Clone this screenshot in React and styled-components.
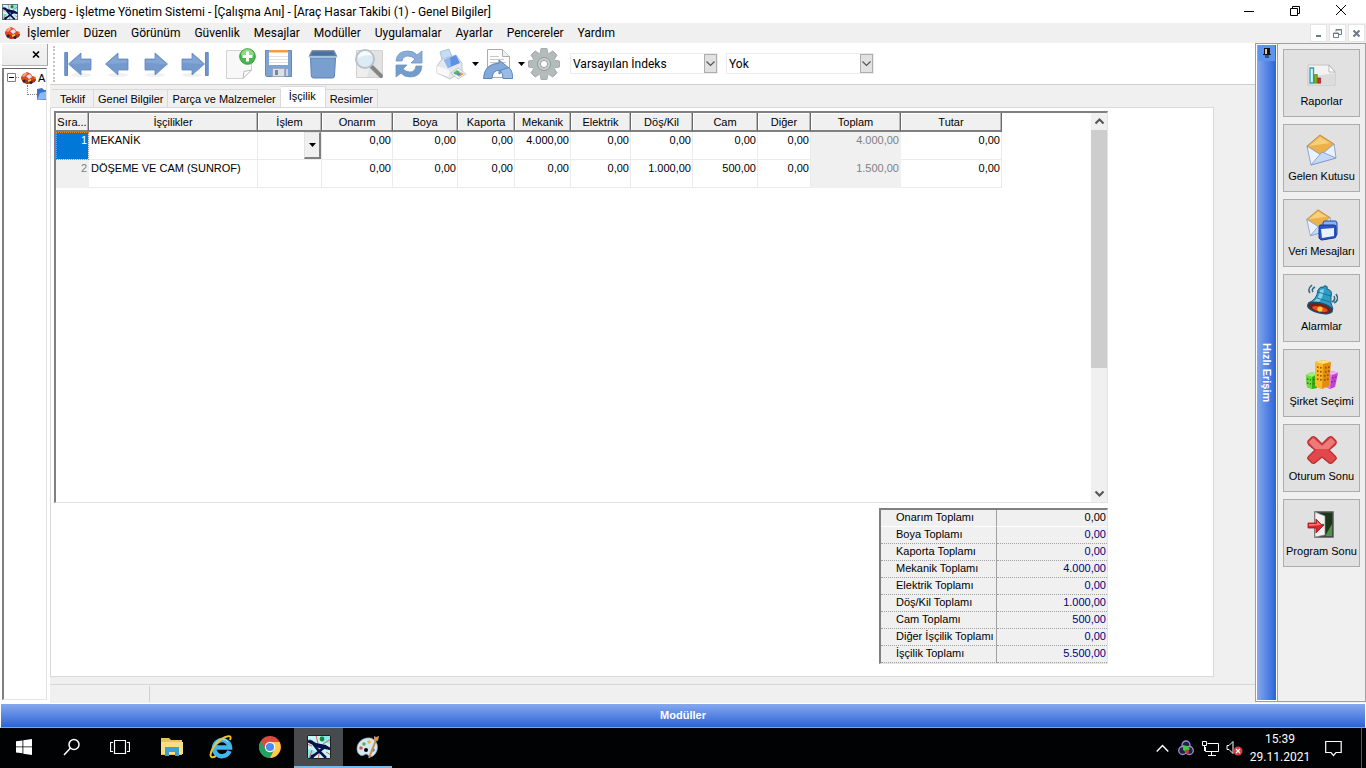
import React from "react";
import styled, { createGlobalStyle, css } from "styled-components";

const UI = `Roboto, "Noto Sans", sans-serif`;
const SANS = `"Liberation Sans", Arial, sans-serif`;

const GlobalStyle = createGlobalStyle`
  *, *::before, *::after { box-sizing: border-box; }
  body { margin: 0; background: #f0f0f0; color: #000; font: 11px/14px ${SANS}; }
  button, select { font: inherit; color: inherit; border: 0; padding: 0; margin: 0; background: none; border-radius: 0; }
  svg { display: block; flex: none; }
`;

const Screen = styled.div`
  display: flex;
  flex-direction: column;
  min-height: 100vh;
`;

/* ---------- title and menu ---------- */
const TitleBar = styled.header`
  display: flex;
  align-items: center;
  height: 23px;
  padding-left: 2px;
  background: #fff;
  font: 12px/16px ${UI};
`;
const Title = styled.h1`
  flex: 1;
  margin: 0 0 0 5px;
  font: inherit;
  white-space: nowrap;
`;
const CaptionButton = styled.button`
  display: grid;
  place-items: center;
  width: 46px;
  height: 20px;
`;
const CaptionGroup = styled.div`
  display: flex;
  padding-right: 2px;
`;
const MenuBar = styled.nav`
  display: flex;
  align-items: center;
  height: 20px;
  padding: 0 1px 0 4px;
  font: 12px/16px ${UI};
`;
const MenuList = styled.div`
  display: flex;
  flex: 1;
  gap: 14px;
  padding-left: 6px;
`;
const MenuButton = styled.button`
  white-space: nowrap;
`;
const ChildButton = styled.button`
  display: grid;
  place-items: center;
  width: 17px;
  height: 18px;
  margin-left: 2px;
  background: #fff;
  border: 1px solid #e4e4e4;
`;

/* ---------- workspace ---------- */
const Workspace = styled.div`
  display: flex;
  flex: 1;
`;
const TreePanel = styled.aside`
  display: flex;
  flex-direction: column;
  width: 50px;
  padding: 1px 2px 3px 2px;
  background: #fff;
`;
const PanelHead = styled.div`
  display: flex;
  justify-content: flex-end;
  height: 22px;
  padding-right: 4px;
  margin-bottom: 2px;
  background: linear-gradient(#f4f4f4, #ececec);
  border-right: 1px solid #a0a0a0;
  border-bottom: 1px solid #b4b4b4;
`;
const CloseButton = styled.button`
  display: grid;
  place-items: center;
  width: 15px;
`;
const Tree = styled.ul`
  flex: 1;
  width: 45px;
  margin: 0;
  padding: 0 0 0 3px;
  list-style: none;
  overflow: hidden;
  border: 1px solid #e3e3e3;
  border-top-color: #696969;
  border-left: 2px solid #808080;
`;
const TreeItem = styled.li`
  display: flex;
  align-items: center;
  height: 17px;
  gap: ${(p) => (p.$child ? 0 : 1)}px;
  padding-left: ${(p) => (p.$child ? 20 : 0)}px;
`;
const Lead = styled.span`
  width: 10px;
  height: 10px;
  margin-top: -10px;
  flex: none;
  border-left: 1px dotted #808080;
  border-bottom: 1px dotted #808080;
`;

const Main = styled.main`
  display: flex;
  flex: 1;
  flex-direction: column;
  min-width: 0;
`;
const Toolbar = styled.div`
  display: flex;
  align-items: center;
  height: 42px;
  padding-left: 3px;
  background: #fff;
  border-bottom: 1px solid #cdcdcd;
`;
const Grip = styled.span`
  width: 5px;
  height: 36px;
  border-left: 2px dotted #c4c4c4;
`;
const ToolButton = styled.button`
  display: grid;
  place-items: center;
  width: ${(p) => p.$w || 39}px;
  height: 36px;
  margin-left: ${(p) => p.$before || 0}px;
`;
const Combo = styled.div`
  display: grid;
  align-items: center;
  width: 148px;
  height: 21px;
  margin-left: 8px;
  border: 1px solid #ececec;
  font: 12px/16px ${UI};
`;
const ComboSelect = styled.select`
  grid-area: 1 / 1;
  width: 100%;
  height: 19px;
  padding-left: 2px;
  appearance: none;
  outline: 0;
`;
const ComboArrow = styled.span`
  display: grid;
  grid-area: 1 / 1;
  place-items: center;
  justify-self: end;
  width: 13px;
  height: 19px;
  pointer-events: none;
  background: #e1e1e1;
  border: 1px solid #adadad;
`;

const Tabs = styled.div`
  display: flex;
  align-items: flex-end;
  height: 22px;
  padding-left: 2px;
`;
const Tab = styled.button`
  min-width: 42px;
  height: 18px;
  padding: 0 4px;
  white-space: nowrap;
  border: 1px solid #d9d9d9;
  border-width: 1px 1px 0 0;
  ${(p) =>
    p.$active &&
    css`
      height: 21px;
      padding: 0 9px 3px 8px;
      background: #fff;
    `}
`;
const Page = styled.section`
  display: flex;
  flex: 1;
  flex-direction: column;
  align-items: flex-end;
  gap: 5px;
  margin-right: 41px;
  padding: 3px 105px 12px 3px;
  background: #fff;
  border: 1px solid #d9d9d9;
`;
const GridFrame = styled.div`
  display: flex;
  flex: 1;
  align-self: stretch;
  justify-content: space-between;
  border: 1px solid #e3e3e3;
  border-top: 2px solid #808080;
  border-left: 2px solid #808080;
`;
const Grid = styled.table`
  align-self: flex-start;
  table-layout: fixed;
  width: 946px;
  border-collapse: separate;
  border-spacing: 0;
`;
const HeadCell = styled.th`
  height: 19px;
  padding: 0;
  font-weight: 400;
  text-align: center;
  white-space: nowrap;
  background: #f0f0f0;
  border-right: 1px solid #696969;
  border-bottom: 2px solid #808080;
  box-shadow: inset -1px 0 #b8b8b8, inset 1px 1px #fff;
`;
const Cell = styled.td`
  height: 28px;
  padding: ${(p) => (p.$flush ? "0" : "1px 1px 0 2px")};
  text-align: ${(p) => (p.$text ? "left" : "right")};
  vertical-align: top;
  white-space: nowrap;
  border-right: 1px solid #ebebeb;
  border-bottom: 1px solid #ebebeb;
  ${(p) =>
    p.$muted &&
    css`
      color: #808080;
      background: #f0f0f0;
      border-color: #f0f0f0;
    `}
  ${(p) =>
    p.$selected &&
    css`
      color: #fff;
      background: #0078d7;
      outline: 1px dotted #e08a28;
      outline-offset: -1px;
    `}
`;
const CellCombo = styled.div`
  display: grid;
  height: 27px;
`;
const CellSelect = styled.select`
  grid-area: 1 / 1;
  width: 100%;
  appearance: none;
`;
const CellArrow = styled.span`
  display: grid;
  grid-area: 1 / 1;
  place-items: center;
  justify-self: end;
  width: 17px;
  height: 27px;
  pointer-events: none;
  background: #f0f0f0;
  border: 1px solid #e3e3e3;
  border-right: 2px solid #808080;
  border-bottom: 2px solid #808080;
`;
const ScrollTrack = styled.div`
  display: flex;
  flex-direction: column;
  width: 16px;
  background: #f0f0f0;
`;
const ScrollButton = styled.button`
  display: grid;
  place-items: center;
  height: 17px;
`;
const ScrollRail = styled.div`
  flex: 1;
`;
const ScrollThumb = styled.div`
  height: 67%;
  background: #cdcdcd;
`;

const Totals = styled.table`
  width: 229px;
  table-layout: fixed;
  border-collapse: separate;
  border-spacing: 0;
  background: #f0f0f0;
  border: 1px solid #e3e3e3;
  border-top: 2px solid #808080;
  border-left: 2px solid #808080;
`;
const TotalRow = styled.tr`
  color: ${(p) => (p.$current ? "#000" : "#000080")};
  th, td {
    height: 17px;
    padding: 0 1px 2px 0;
    line-height: 14px;
    border-bottom: 1px ${(p) => (p.$current ? "solid #fff" : "dotted #a0a0a0")};
  }
  th {
    padding-left: 15px;
    color: #000;
    font-weight: 400;
    text-align: left;
    white-space: nowrap;
    border-right: 1px solid #a0a0a0;
  }
  td { text-align: right; }
`;
const StatusBar = styled.footer`
  height: 19px;
  margin-top: 7px;
  padding-top: 1px;
  border-top: 1px solid #d7d7d7;
`;
const StatusPane = styled.div`
  width: 100px;
  height: 16px;
  border-right: 1px solid #d0d0d0;
`;

/* ---------- quick access ---------- */
const QuickHandle = styled.div`
  display: grid;
  grid-template-rows: 16px 1fr 16px;
  justify-items: center;
  width: 23px;
  margin-bottom: 1px;
  padding: 1px;
  color: #fff;
  font-weight: 700;
  background: linear-gradient(90deg, #86a8ec, #2a64da) content-box, #fff;
  border: 1px solid #a0a0a0;
`;
const HandleText = styled.span`
  align-self: center;
  writing-mode: vertical-rl;
`;
const PinButton = styled.button`
  display: grid;
  place-items: center;
  width: 17px;
  background: #5b93ee;
`;
const QuickPanel = styled.nav`
  display: flex;
  flex-direction: column;
  gap: 7px;
  width: 88px;
  margin-bottom: 1px;
  padding: 5px 5px 0;
  border: 1px solid #a0a0a0;
  border-left: 0;
`;
const QuickButton = styled.button`
  display: flex;
  flex-direction: column;
  align-items: center;
  gap: 3px;
  height: 68px;
  padding-top: 9px;
  white-space: nowrap;
  background: #e1e1e1;
  border: 1px solid #adadad;
`;

const ModulesBar = styled.button`
  height: 25px;
  padding-bottom: 2px;
  color: #fff;
  font-weight: 700;
  background: linear-gradient(#86a8ec, #2a64da);
  border: 1px solid #fff;
  border-bottom-color: #a0a0a0;
`;

/* ---------- taskbar ---------- */
const Taskbar = styled.footer`
  display: flex;
  height: 40px;
  color: #fff;
  background: #000204;
  font: 12px/18px ${UI};
`;
const TaskGroup = styled.div`
  display: flex;
  flex: 1;
`;
const TaskButton = styled.button`
  display: grid;
  place-items: center;
  width: ${(p) => (p.$app ? 49 : 48)}px;
  margin-left: ${(p) => (p.$first ? 3 : 0)}px;
  background: ${(p) => (p.$active ? "#484b4e" : "transparent")};
  border: solid ${(p) => (p.$running ? "#76b9ed" : "transparent")};
  border-width: 0 0 2px;
`;
const Tray = styled.div`
  display: flex;
  align-items: center;
`;
const TrayButton = styled.button`
  display: grid;
  place-items: center;
  width: 24px;
  height: 40px;
`;
const Clock = styled.time`
  width: 68px;
  text-align: center;
`;
const NoticeButton = styled(TrayButton)`
  width: 38px;
`;
const DesktopEdge = styled.span`
  width: 5px;
  height: 40px;
  margin-left: 9px;
  border-left: 1px solid #55585a;
`;

/* ---------- drawings ---------- */
const AppIcon = ({ s = 16 }) => (
  <svg width={s} height={s} viewBox="0 0 24 24" aria-hidden="true">
    <path fill="#c5f5f7" d="M0 0h24v24H0z" />
    <path fill="#8be6ea" d="M13 0h11v9L14 7zM0 14l8 2-2 8H0z" />
    <path stroke="#e0625c" strokeWidth="1" fill="none" d="M0 9l5 2M2 24l3-9M9 0l2 9M16 9l8-5M8 19l5-2 4 5M19 17l5 3M13 15l-2 9" />
    <path stroke="#08104a" strokeWidth="2.600" fill="none" d="M1 6l8 4 9 1 5 3M4 6l7 9 8 8M19 11L5 22" />
    <path fill="#08104a" d="M2 4l7 4 5 1 9 4v2l-11-2-5-2zM4 20l4-1-2 5-3-1z" />
    <circle cx="15" cy="4" r="2.400" fill="#128a38" />
    <path fill="none" stroke="#222" d="M.5.500h23v23H.5z" />
  </svg>
);
const CarIcon = () => (
  <svg width="17" height="16" viewBox="0 0 17 16" aria-hidden="true">
    <path fill="#27448c" d="M1 8l3 5 4 1v-3zM12 9l4-1-1 4-3 1z" />
    <path fill="#e4451b" d="M1 7l2-3 4-2 4 2 1 2 4 1v3l-4 3-5 1-4-2-2-3z" />
    <path fill="#fca47d" d="M2 6l3-3 3 0-4 4z" />
    <path fill="#d9e8ff" d="M6 6l4-2 2 3-3 2z" />
    <path fill="#b82d10" d="M4 9l5 2 7-2v1l-4 3-5 1-3-2z" />
    <path fill="#ffc63c" d="M8 10l3-1v2l-3 1zM14 8l2-1v2z" />
    <circle cx="4" cy="11" r="1.500" fill="#182448" /><circle cx="11" cy="12.500" r="1.500" fill="#182448" />
  </svg>
);
const FolderIcon = () => (
  <svg width="16" height="15" viewBox="0 0 16 15" aria-hidden="true">
    <path fill="#3f72c7" d="M0 2l5-1 2 2h7v10H0z" /><path fill="#8bb9f5" d="M0 13L3 6l13-3-3 9z" />
  </svg>
);
const Arrow = ({ flip, bar }) => (
  <svg width={bar ? 28 : 24} height="28" viewBox={bar ? "0 0 28 28" : "4 0 24 28"} aria-hidden="true">
    <g transform={flip ? (bar ? "translate(28 0) scale(-1 1)" : "translate(32 0) scale(-1 1)") : undefined}>
      <ellipse cx="17" cy="25" rx="10" ry="2" fill="#f0f1f3" />
      {bar && <path fill="#7198ce" stroke="#5c87c0" d="M.8 2.500h2.700v23H.8z" />}
      <path fill="#7399cd" stroke="#6289bf" strokeWidth=".8" d="M4.500 14L17 3v6h10v11H17v5z" />
      <path fill="#8eafd9" d="M6 14L16.500 5v5H26v3z" opacity=".6" />
    </g>
  </svg>
);
const NewIcon = () => (
  <svg width="30" height="32" viewBox="0 0 30 32" aria-hidden="true">
    <path fill="#f8f8f8" stroke="#d2d2d2" d="M.5 2.500h25V22L17 30.500H.5z" />
    <path fill="#fff" stroke="#bdbdbd" d="M17 30.500l1-7 7.500-1.500z" />
    <circle cx="21.500" cy="8.500" r="7.800" fill="#45b94a" stroke="#2e9837" />
    <path fill="#8dda83" d="M15 7a6.500 6 0 0 1 13 0q-6 3-13 0z" />
    <path stroke="#fff" strokeWidth="3" d="M21.500 3.500v10M16.500 8.500h10" />
  </svg>
);
const SaveIcon = () => (
  <svg width="28" height="28" viewBox="0 0 28 28" aria-hidden="true">
    <path fill="#7da3d2" stroke="#6189bd" d="M.5.500h26v26h-25l-1-1z" />
    <path fill="#fff" d="M4 1h19v14H4z" /><path fill="#f49b4d" d="M4 0h19v2.500H4z" />
    <path stroke="#e1e1e1" d="M4 6.500h19M4 9.500h19M4 12.500h19" />
    <path fill="#dce0e5" stroke="#a1aab6" d="M7.500 18.500h12v8h-12z" /><path fill="#76889e" d="M10 20h3v5h-3z" />
    <path fill="#c5d5e9" d="M21 19h2v7h-2z" />
  </svg>
);
const TrashIcon = () => (
  <svg width="30" height="30" viewBox="0 0 30 30" aria-hidden="true">
    <path fill="#789fce" stroke="#5c83b8" d="M2.500 9h25l-1 18q-.2 2-2 2h-19q-2 0-2.200-2z" />
    <path fill="#5b7fb1" stroke="#8b9099" d="M4 1.500h22l3 6H1z" />
    <path fill="#4b6f9f" d="M5 3h20l1.500 3h-23z" /><path fill="#a5c1e2" d="M1 7h28v2H1z" />
  </svg>
);
const FindIcon = () => (
  <svg width="30" height="30" viewBox="0 0 30 30" aria-hidden="true">
    <path fill="#eee" stroke="#d0d0d0" d="M2.500 1.500h26v27h-26z" />
    <path fill="#dadada" d="M20 1h8v27H13z" opacity=".6" />
    <path stroke="#858585" strokeWidth="4" strokeLinecap="round" d="M18 18l9 9" />
    <circle cx="11" cy="10" r="9" fill="#dcebf5" stroke="#bbc1c6" strokeWidth="2" />
    <path fill="#f5fafd" d="M4 9q1-7 8-7 5 1 6 5-7-2-14 2z" />
  </svg>
);
const RefreshIcon = () => (
  <svg width="28" height="28" viewBox="0 0 28 28" aria-hidden="true" stroke="#6d94c5" strokeWidth=".8">
    <path fill="#8bacd6" d="M1 11Q2 1 13 1q6 0 9 4l5-4v12H16l4-4q-3-3-7-3-5 0-6 5z" />
    <path fill="#739bcc" d="M27 16q-1 11-12 11-6 0-9-4l-5 4V15h11l-4 4q3 3 7 3 5 0 6-6z" />
  </svg>
);
const PrintIcon = () => (
  <svg width="30" height="32" viewBox="0 0 30 32" aria-hidden="true">
    <path fill="#c4dcf4" stroke="#9bb9d7" strokeWidth=".8" d="M4 4l9-3 4 10-10 4z" />
    <path fill="#e6e6ed" stroke="#b9b9c5" strokeWidth=".8" d="M1 18l5-7 14-4 6 8v9l-12 7L1 25z" />
    <path fill="#5d91e5" d="M8 12l12-5 4 8-12 5z" /><path fill="#8db6f3" d="M8 12l6-3 1 9-3 2z" />
    <path fill="#f8f8fa" d="M1 18l12 4v7L1 25z" />
    <path fill="#f5fafc" stroke="#a9b8bc" strokeWidth=".7" d="M15 25l7-5 8 6-8 5z" />
    <path fill="#56b868" d="M17 25l4-3 3 2-4 3z" /><path fill="#e9a446" d="M22 27l3-3 3 2-5 3z" /><path fill="#4f8ed4" d="M20 26l3-2 2 2-3 2z" />
  </svg>
);
const ShareIcon = () => (
  <svg width="30" height="32" viewBox="0 0 30 32" aria-hidden="true">
    <path fill="#fcfcfc" stroke="#acacac" d="M4.500 1.500h15l7 7v21h-22z" />
    <path fill="#eee" stroke="#acacac" d="M19.500 1.500v7h7" />
    <path stroke="#c8c8c8" d="M7 8.500h9M7 11.500h14M7 14.500h16" />
    <path fill="#84a9d8" stroke="#5b86bd" d="M.5 30.500Q1 16 16 15v-3l10 8-10 6v-4q-7 1-7 8.500z" />
    <path fill="#9abce4" stroke="#5b86bd" d="M20 30.500q0-6-3-8l9-3q4 4 3.500 11z" />
  </svg>
);
const GearIcon = () => (
  <svg width="32" height="32" viewBox="-16 -16 32 32" aria-hidden="true">
    <g fill="#b4bbbb" stroke="#9aa3a3" strokeWidth=".8">
      {[0, 45, 90, 135].map((a) => (
        <path key={a} transform={`rotate(${a})`} d="M-4-10l1-5.500h6L4-10v20l-1 5.500h-6L-4 10z" />
      ))}
    </g>
    <circle r="11.500" fill="#b4bbbb" /><circle r="6.500" fill="#c9cece" stroke="#8f999a" /><circle r="3.600" fill="#fff" stroke="#949e9f" />
  </svg>
);
const Triangle = () => (
  <svg width="7" height="4" viewBox="0 0 7 4" aria-hidden="true"><path d="M0 0h7L3.500 4z" /></svg>
);
const Chevron = ({ up, color = "#555", s = 9, w = 1.200 }) => (
  <svg width={s} height={s} viewBox="0 0 9 9" aria-hidden="true" fill="none" stroke={color} strokeWidth={w}>
    <path d={up ? "M.5 6.500l4-4 4 4" : "M.5 2.500l4 4 4-4"} />
  </svg>
);
const ReportIcon = () => (
  <svg width="32" height="32" viewBox="0 0 32 32" aria-hidden="true">
    <path fill="#f3f3f3" stroke="#bcbcbc" strokeWidth=".8" d="M2 6h21l6 7v13H2z" />
    <path fill="#dcdcdc" d="M9 17l20-3v11H15z" /><path fill="#fff" stroke="#aaa" strokeWidth=".8" d="M23 6v7h6z" />
    <path fill="#dff8fa" stroke="#23a2b6" strokeWidth="1.300" d="M4 9h3.500v15H4z" />
    <path fill="#70b91f" stroke="#3f8610" strokeWidth=".7" d="M8.500 15.500h2.800v8.700H8.500z" />
    <path fill="#d3332d" stroke="#9d1611" strokeWidth=".7" d="M11.800 19h2.800v5.200h-2.800z" />
  </svg>
);
const Envelope = () => (
  <>
    <path fill="#ecb14a" stroke="#ae8032" strokeWidth=".8" d="M1 12L14 1l14 9-4 13-20-3z" />
    <path fill="#f8cf7c" d="M3 12L14 3l10 6z" />
    <path fill="#e9f2ff" stroke="#7b93c4" strokeWidth=".8" d="M1 12l14 9L28 10l2 14L5 31z" />
    <path fill="#c5dafa" stroke="#7b93c4" strokeWidth=".8" d="M5 31l11-13 14 6z" />
  </>
);
const InboxIcon = () => (
  <svg width="32" height="32" viewBox="0 0 32 32" aria-hidden="true"><Envelope /></svg>
);
const DataIcon = () => (
  <svg width="32" height="32" viewBox="0 0 32 32" aria-hidden="true">
    <g transform="scale(.86)"><Envelope /></g>
    <path fill="#8ab1f1" stroke="#2447a5" d="M17 14q0-2 2-2l10 0q2 0 2 2v11q0 2-2 2l-10 2q-2 0-2-2z" />
    <path fill="#2c55c7" stroke="#1b3791" d="M13 18q0-2 2-2h13q2 0 2 2v9q0 2-2 2l-12 2q-2 0-3-2z" />
    <path fill="#e7f1ff" d="M15 20l13-1v8l-12 2z" />
  </svg>
);
const BellIcon = () => (
  <svg width="32" height="32" viewBox="0 0 32 32" aria-hidden="true">
    <path fill="none" stroke="#2f6786" strokeWidth="1.500" d="M4 9Q1 5 6 1M7 8Q5 5 9 3M28 12q2 4-2 6M30 10q4 6-2 9" />
    <path fill="#2f9cc6" stroke="#155475" strokeWidth=".9" d="M2 19q9-3 10-13 2-4 6-3 0-2 2-1 2 0 1 3 6 1 4 8-1 6 2 12-2 3-8 3Q8 27 2 19z" />
    <path fill="#85d5e9" d="M7 18q7-5 7-12l4-1q-1 10-7 15z" />
    <path fill="none" stroke="#15658b" strokeWidth=".8" d="M12 8l13 4M11 14l13 4" />
    <ellipse cx="14" cy="24" rx="12.500" ry="5" transform="rotate(13 14 24)" fill="#7b1f12" stroke="#164f70" strokeWidth="1.500" />
    <ellipse cx="14" cy="25" rx="8" ry="2.500" transform="rotate(13 14 25)" fill="#e4501f" />
    <circle cx="14" cy="25" r="2.600" fill="#ffc837" />
  </svg>
);
const CompanyIcon = () => (
  <svg width="32" height="32" viewBox="0 0 32 32" aria-hidden="true">
    <path fill="#36ad14" d="M0 16l6-3 5 2v14l-5 1-5-2z" /><path fill="#6bdc38" d="M0 16l6 2v12l-5-2z" /><path fill="#a3f078" d="M0 16l6-3 5 2-5 3z" />
    <path fill="#c242d2" d="M20 14l7-2 5 2-3 14-5 2-4-2z" /><path fill="#e379ec" d="M20 14l6 2-2 14-4-2z" /><path fill="#f5b0f8" d="M20 14l7-2 5 2-6 2z" />
    <path fill="#e48c0c" d="M9 3l8-2 8 2-2 24-7 3-7-3z" /><path fill="#ffb927" d="M9 3l8 2-1 25-7-3z" /><path fill="#ffdf7d" d="M9 3l8-2 8 2-8 2z" />
    <path stroke="#8f5605" strokeWidth="1.700" strokeDasharray="1.600 1.500" d="M11 8l5 1M11 12l5 1M11 16l5 1M11 20l5 1M19 9l5-1M19 13l5-1M18 17l5-1M18 21l5-1" />
    <path stroke="#25750f" strokeWidth="1.300" strokeDasharray="1.500 1.500" d="M1 20l4 1M1 24l4 1M7 21l3-1M7 25l3-1" />
    <path stroke="#842a94" strokeWidth="1.300" strokeDasharray="1.500 1.500" d="M26 19l5-1M25 23l4-1" />
  </svg>
);
const CrossIcon = () => (
  <svg width="32" height="32" viewBox="0 0 32 32" aria-hidden="true">
    <path fill="#e0484b" stroke="#b92c31" strokeWidth="1.200" strokeLinejoin="round" d="M2 7l4-4q2-1 4 1l6 6 6-6q2-2 4-1l4 4q1 2-1 4l-6 5 6 6q2 2 1 3l-4 4q-2 1-4-1l-6-5-6 5q-2 2-4 1l-4-4q-1-1 1-3l6-6-6-5q-2-2-1-4z" />
    <path fill="#f28c8b" d="M3 8l4-4 9 8 9-8 4 4-6 7H9z" opacity=".75" />
  </svg>
);
const ExitIcon = () => (
  <svg width="32" height="32" viewBox="0 0 32 32" aria-hidden="true">
    <path fill="#1d3518" stroke="#555" strokeWidth="1.500" d="M9 3h18v25H9z" />
    <path fill="#4f9147" d="M19 27l7-12v12z" />
    <path fill="#f2f2f2" stroke="#888" strokeWidth=".7" d="M9 3l10 4v19l-10 2z" />
    <circle cx="17" cy="16" r="1.200" fill="#555" />
    <path fill="#e32028" stroke="#a80f16" strokeWidth=".8" d="M2 14h8v-4l7 7-7 7v-5H2z" /><path fill="#ff7777" d="M3 15h8v-3l4 4-12 1z" />
  </svg>
);

const WindowsIcon = () => (
  <svg width="16" height="16" viewBox="0 0 16 16" aria-hidden="true"><path fill="#fff" d="M0 2.300l6.500-.9v6H0zM7.300 1.300L16 0v7.400H7.300zM0 8.300h6.500v6L0 13.500zM7.300 8.300H16V16l-8.700-1.300z" /></svg>
);
const SearchIcon = () => (
  <svg width="18" height="18" viewBox="0 0 18 18" fill="none" stroke="#fff" strokeWidth="1.500" aria-hidden="true"><circle cx="11" cy="6.500" r="5" /><path d="M7.500 10L1 17" /></svg>
);
const TaskViewIcon = () => (
  <svg width="20" height="16" viewBox="0 0 20 16" fill="none" stroke="#fff" aria-hidden="true"><path strokeWidth="1.200" d="M4.500 1.500h11v13h-11zM3 3.500H.5v9H3M17 3.500h2.500v9H17" /></svg>
);
const ExplorerIcon = () => (
  <svg width="22" height="20" viewBox="0 0 22 20" aria-hidden="true">
    <path fill="#eac35d" d="M0 1h8l2 2h11v15H0z" /><path fill="#fbdd86" d="M0 5h22v12H0z" /><path fill="#36a3d5" d="M4 19v-9h14v9h-4v-4H8v4z" />
  </svg>
);
const IeIcon = () => (
  <svg width="24" height="24" viewBox="0 0 24 24" aria-hidden="true">
    <path fill="none" stroke="#42b6ed" strokeWidth="4.500" d="M20.500 16A8 8 0 1 1 21 12.500H7" />
    <path fill="none" stroke="#b8e9fd" d="M6 9q2-4 7-5 4 0 6 3" />
    <path fill="none" stroke="#efc42d" strokeWidth="2" d="M21 5q2-5-3-3.500C11 3 2 13 1.500 20q0 4 5.500 1" />
  </svg>
);
const ChromeIcon = () => (
  <svg width="22" height="22" viewBox="-11 -11 22 22" aria-hidden="true">
    <circle r="11" fill="#dd4b3e" /><path fill="#1da462" d="M-9.500-5.500A11 11 0 0 0 0 11L4.300 2.500-4.300 2.500z" /><path fill="#ffcd46" d="M0 11A11 11 0 0 0 9.500-5L0-5 4.300 2.500z" />
    <circle r="5.200" fill="#fff" /><circle r="4.100" fill="#4c8bf5" />
  </svg>
);
const PaintIcon = () => (
  <svg width="24" height="24" viewBox="0 0 24 24" aria-hidden="true">
    <path fill="#d4e8f3" stroke="#8eacbd" strokeWidth=".7" d="M11 3C3 4-1 12 2 18q3 4 6 2 2-2 4 0 2 3 5 1c5-4 6-11 2-15q-3-4-8-3z" />
    <circle cx="10" cy="15" r="2" fill="#000204" /><circle cx="5" cy="13" r="1.800" fill="#dc5548" /><circle cx="8" cy="9" r="1.800" fill="#63ad4c" /><circle cx="13" cy="7" r="1.800" fill="#edb638" /><circle cx="17" cy="15" r="1.800" fill="#4a91d3" />
    <path stroke="#d18a48" strokeWidth="2" d="M20 5l-7 18" /><path fill="#c99460" d="M18 1l2 1 3-1-1 5-4-1z" />
  </svg>
);
const RingsIcon = () => (
  <svg width="16" height="16" viewBox="0 0 16 16" aria-hidden="true">
    <g fill="#24203f" stroke="#9b93d4" strokeWidth="1.300"><circle cx="8" cy="5" r="4" /><circle cx="4.700" cy="10.500" r="4" /><circle cx="11.300" cy="10.500" r="4" /></g>
    <path fill="#35d23b" d="M5 5l4 1 3 3-4 3-3-2z" /><circle cx="9" cy="11.500" r="2" fill="#d9362e" />
  </svg>
);
const NetworkIcon = () => (
  <svg width="17" height="15" viewBox="0 0 17 15" fill="none" stroke="#fff" aria-hidden="true"><path d="M5.500 2.500h11v8H3.500V6M9.500 11v3M6 14.500h8M.5.500h4v4h-4zM2.500 5v5" /></svg>
);
const SoundIcon = () => (
  <svg width="17" height="16" viewBox="0 0 17 16" aria-hidden="true"><path fill="none" stroke="#fff" d="M1 5.500h2l4-4v12l-4-4H1z" /><circle cx="12" cy="11" r="4.500" fill="#db3a40" /><path stroke="#fff" strokeWidth="1.200" d="M10 9l4 4M14 9l-4 4" /></svg>
);
const NoticeIcon = () => (
  <svg width="17" height="17" viewBox="0 0 17 17" fill="none" stroke="#fff" strokeWidth="1.200" aria-hidden="true"><path d="M.7 1.500h15.500v11H11L8.500 15.500 6 12.500H.7z" /></svg>
);

const menus = ["İşlemler", "Düzen", "Görünüm", "Güvenlik", "Mesajlar", "Modüller", "Uygulamalar", "Ayarlar", "Pencereler", "Yardım"];
const tabs = ["Teklif", "Genel Bilgiler", "Parça ve Malzemeler", "İşçilik", "Resimler"];
const columns = [
  ["Sıra...", 33], ["İşçilikler", 169], ["İşlem", 64], ["Onarım", 71], ["Boya", 65], ["Kaporta", 57], ["Mekanik", 56],
  ["Elektrik", 60], ["Döş/Kil", 62], ["Cam", 65], ["Diğer", 53], ["Toplam", 90], ["Tutar", 101],
];
const rows = [
  { name: "MEKANİK", values: ["0,00", "0,00", "0,00", "4.000,00", "0,00", "0,00", "0,00", "0,00"], total: "4.000,00", amount: "0,00" },
  { name: "DÖŞEME VE CAM (SUNROF)", values: ["0,00", "0,00", "0,00", "0,00", "0,00", "1.000,00", "500,00", "0,00"], total: "1.500,00", amount: "0,00" },
];
const totals = [
  ["Onarım Toplamı", "0,00"], ["Boya Toplamı", "0,00"], ["Kaporta Toplamı", "0,00"], ["Mekanik Toplamı", "4.000,00"], ["Elektrik Toplamı", "0,00"],
  ["Döş/Kil Toplamı", "1.000,00"], ["Cam Toplamı", "500,00"], ["Diğer İşçilik Toplamı", "0,00"], ["İşçilik Toplamı", "5.500,00"],
];
const quick = [
  ["Raporlar", ReportIcon], ["Gelen Kutusu", InboxIcon], ["Veri Mesajları", DataIcon], ["Alarmlar", BellIcon],
  ["Şirket Seçimi", CompanyIcon], ["Oturum Sonu", CrossIcon], ["Program Sonu", ExitIcon],
];

function ComboBox({ label, value }) {
  return (
    <Combo>
      <ComboSelect aria-label={label} defaultValue={value}><option>{value}</option></ComboSelect>
      <ComboArrow><Chevron /></ComboArrow>
    </Combo>
  );
}

function LabourGrid() {
  return (
    <GridFrame>
      <Grid>
        <colgroup>{columns.map(([c, w]) => <col key={c} width={w} />)}</colgroup>
        <thead><tr>{columns.map(([c]) => <HeadCell key={c} scope="col">{c}</HeadCell>)}</tr></thead>
        <tbody>
          {rows.map((r, i) => (
            <tr key={r.name}>
              <Cell $muted={i > 0} $selected={i === 0}>{i + 1}</Cell>
              <Cell $text>{r.name}</Cell>
              <Cell $flush>
                {i === 0 && (
                  <CellCombo>
                    <CellSelect aria-label="İşlem"><option></option></CellSelect>
                    <CellArrow><Triangle /></CellArrow>
                  </CellCombo>
                )}
              </Cell>
              {r.values.map((v, k) => <Cell key={k}>{v}</Cell>)}
              <Cell $muted>{r.total}</Cell>
              <Cell>{r.amount}</Cell>
            </tr>
          ))}
        </tbody>
      </Grid>
      <ScrollTrack>
        <ScrollButton aria-label="Yukarı"><Chevron up w={2} /></ScrollButton>
        <ScrollRail><ScrollThumb /></ScrollRail>
        <ScrollButton aria-label="Aşağı"><Chevron w={2} /></ScrollButton>
      </ScrollTrack>
    </GridFrame>
  );
}

export default function App() {
  return (
    <Screen>
      <GlobalStyle />
      <TitleBar>
        <AppIcon />
        <Title>Aysberg - İşletme Yönetim Sistemi - [Çalışma Anı] - [Araç Hasar Takibi (1) - Genel Bilgiler]</Title>
        <CaptionGroup>
          <CaptionButton aria-label="Simge durumuna küçült"><svg width="10" height="10" stroke="#000"><path d="M0 4.500h10" /></svg></CaptionButton>
          <CaptionButton aria-label="Önceki boyut"><svg width="10" height="12" fill="none" stroke="#000"><path d="M.5 2.500h7v7h-7zM2.500 2V.5h7v7H8" /></svg></CaptionButton>
          <CaptionButton aria-label="Kapat"><svg width="10" height="14" stroke="#000"><path d="M0 0l10 10M10 0L0 10" /></svg></CaptionButton>
        </CaptionGroup>
      </TitleBar>
      <MenuBar>
        <CarIcon />
        <MenuList>{menus.map((m) => <MenuButton key={m}>{m}</MenuButton>)}</MenuList>
        <ChildButton aria-label="Pencereyi küçült"><svg width="9" height="9" stroke="#6d7a87" strokeWidth="2"><path d="M2 7h5" /></svg></ChildButton>
        <ChildButton aria-label="Pencereyi geri yükle"><svg width="9" height="9" fill="none" stroke="#6d7a87"><path d="M3 2.500V.5h5.500v5H6M.5 4h5v4.500h-5zM3 1h5M.5 4.500h5" /></svg></ChildButton>
        <ChildButton aria-label="Pencereyi kapat"><svg width="9" height="9" stroke="#6d7a87" strokeWidth="2"><path d="M1.500 1.500l6 6M7.500 1.500l-6 6" /></svg></ChildButton>
      </MenuBar>

      <Workspace>
        <TreePanel>
          <PanelHead>
            <CloseButton aria-label="Paneli kapat"><svg width="8" height="7" stroke="#000" strokeWidth="1.600"><path d="M1 .5l6 6M7 .5l-6 6" /></svg></CloseButton>
          </PanelHead>
          <Tree>
            <TreeItem>
              <svg width="12" height="9" fill="none" stroke="#808080"><path d="M.5.500h8v8h-8z" /><path stroke="#000" d="M2 4.500h5" /><path strokeDasharray="1 1" d="M9 4.500h3" /></svg>
              <CarIcon />
              <span>A</span>
            </TreeItem>
            <TreeItem $child><Lead /><FolderIcon /></TreeItem>
          </Tree>
        </TreePanel>

        <Main>
          <Toolbar>
            <Grip />
            <ToolButton aria-label="İlk"><Arrow bar /></ToolButton>
            <ToolButton aria-label="Önceki"><Arrow /></ToolButton>
            <ToolButton aria-label="Sonraki"><Arrow flip /></ToolButton>
            <ToolButton aria-label="Son"><Arrow flip bar /></ToolButton>
            <ToolButton $w={38} $before={8} aria-label="Yeni"><NewIcon /></ToolButton>
            <ToolButton $w={38} aria-label="Kaydet"><SaveIcon /></ToolButton>
            <ToolButton $w={46} $before={2} aria-label="Sil"><TrashIcon /></ToolButton>
            <ToolButton $w={46} aria-label="Bul"><FindIcon /></ToolButton>
            <ToolButton $w={34} aria-label="Yenile"><RefreshIcon /></ToolButton>
            <ToolButton $w={38} $before={6} aria-label="Yazdır"><PrintIcon /></ToolButton>
            <ToolButton $w={10} aria-label="Yazdırma seçenekleri"><Triangle /></ToolButton>
            <ToolButton $w={36} aria-label="Aktar"><ShareIcon /></ToolButton>
            <ToolButton $w={10} aria-label="Aktarma seçenekleri"><Triangle /></ToolButton>
            <ToolButton $w={36} aria-label="Ayarlar"><GearIcon /></ToolButton>
            <ComboBox label="İndeks" value="Varsayılan İndeks" />
            <ComboBox label="Filtre" value="Yok" />
          </Toolbar>
          <Tabs role="tablist">
            {tabs.map((t) => <Tab key={t} role="tab" aria-selected={t === "İşçilik"} $active={t === "İşçilik"}>{t}</Tab>)}
          </Tabs>
          <Page>
            <LabourGrid />
            <Totals>
              <colgroup><col width="116" /><col /></colgroup>
              <tbody>
                {totals.map(([k, v], i) => <TotalRow key={k} $current={i === 0}><th scope="row">{k}</th><td>{v}</td></TotalRow>)}
              </tbody>
            </Totals>
          </Page>
          <StatusBar><StatusPane /></StatusBar>
        </Main>

        <QuickHandle>
          <PinButton aria-label="Sabitle"><svg width="8" height="11" viewBox="0 0 8 11"><path fill="#111" d="M1 0h6v6h1v1H0V6h1z" /><path fill="#e4c79a" d="M2 1h2v5H2z" /><path stroke="#111" d="M3 7v3M5 7v3" /></svg></PinButton>
          <HandleText>Hızlı Erişim</HandleText>
        </QuickHandle>
        <QuickPanel>
          {quick.map(([t, Icon]) => <QuickButton key={t}><Icon />{t}</QuickButton>)}
        </QuickPanel>
      </Workspace>

      <ModulesBar>Modüller</ModulesBar>

      <Taskbar>
        <TaskGroup>
          <TaskButton aria-label="Başlat"><WindowsIcon /></TaskButton>
          <TaskButton aria-label="Ara"><SearchIcon /></TaskButton>
          <TaskButton aria-label="Görev görünümü"><TaskViewIcon /></TaskButton>
          <TaskButton $app $first aria-label="Dosya Gezgini"><ExplorerIcon /></TaskButton>
          <TaskButton $app aria-label="Internet Explorer"><IeIcon /></TaskButton>
          <TaskButton $app aria-label="Chrome"><ChromeIcon /></TaskButton>
          <TaskButton $app $active $running aria-label="Aysberg"><AppIcon s={24} /></TaskButton>
          <TaskButton $app $running aria-label="Paint"><PaintIcon /></TaskButton>
        </TaskGroup>
        <Tray>
          <TrayButton aria-label="Gizli simgeler"><Chevron up color="#fff" s={13} w={1} /></TrayButton>
          <TrayButton aria-label="Renk"><RingsIcon /></TrayButton>
          <TrayButton aria-label="Ağ"><NetworkIcon /></TrayButton>
          <TrayButton aria-label="Ses"><SoundIcon /></TrayButton>
          <Clock>15:39<br />29.11.2021</Clock>
          <NoticeButton aria-label="Bildirimler"><NoticeIcon /></NoticeButton>
          <DesktopEdge />
        </Tray>
      </Taskbar>
    </Screen>
  );
}
